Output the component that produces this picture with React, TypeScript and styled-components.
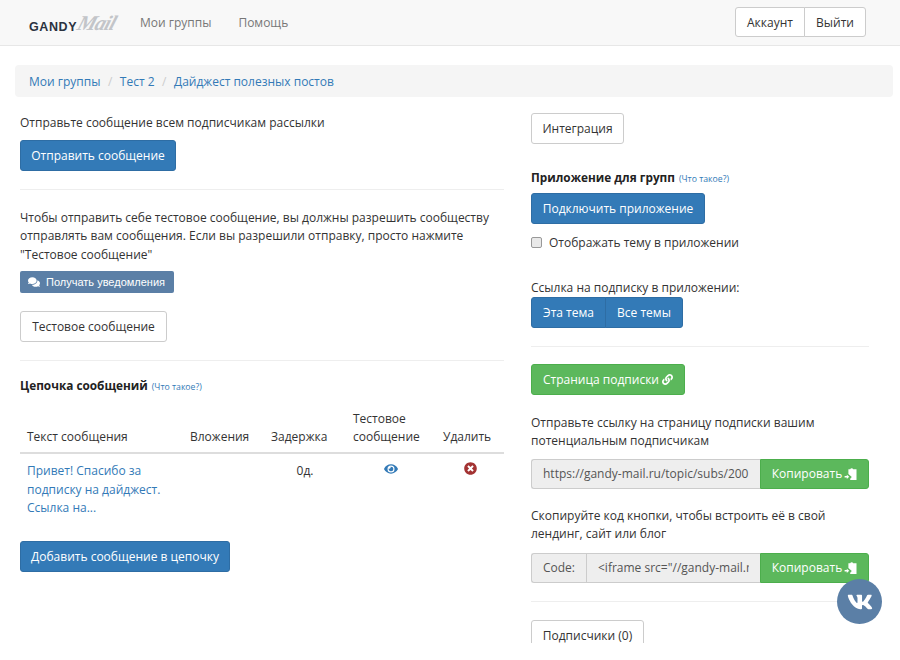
import styled, { createGlobalStyle } from "styled-components";
import { FaComments, FaEye, FaLink, FaTimesCircle, FaVk } from "react-icons/fa";

const GlobalStyle = createGlobalStyle`
  html {
    height: 660px;
    overflow: hidden;
    background: #fff;
  }
  body {
    margin: 0;
    height: 643px;
    overflow: hidden;
    background: #fff;
    font-family: "Open Sans", "Noto Sans", sans-serif;
    font-size: 12px;
    color: #333;
  }
  * {
    box-sizing: border-box;
  }
`;

const Navbar = styled.nav`
  height: 46px;
  background: #f8f8f8;
  border-bottom: 1px solid #e7e7e7;
  display: flex;
  align-items: center;
  padding: 0 34px 0 29px;
`;

const Logo = styled.div`
  width: 111px;
  display: flex;
  align-items: baseline;
  color: #2b3240;
  font-family: "Liberation Sans", sans-serif;
  font-weight: 700;
  font-size: 12.5px;
  letter-spacing: 0.6px;
  padding-top: 4px;
`;

const LogoScript = styled.span`
  font-family: "Liberation Serif", serif;
  font-style: italic;
  font-size: 21px;
  font-weight: 700;
  letter-spacing: -1px;
  color: #c3c5c9;
  margin-left: 1px;
  transform: translateY(-1px) skewX(-18deg);
`;

const NavLinks = styled.div`
  display: flex;
  gap: 27px;
  flex: 1;
  margin-top: -1px;
`;

const NavLink = styled.a`
  color: #777;
`;

const NavButtons = styled.div`
  display: flex;
  margin-top: -1px;
`;

const Button = styled.button<{ $variant?: "default" | "primary" | "success"; $joined?: boolean; $width: number; $height?: number }>`
  width: ${(props) => props.$width}px;
  height: ${(props) => props.$height ?? 31}px;
  flex: none;
  padding: 0;
  border-radius: 3px;
  font-family: inherit;
  font-size: 12px;
  display: inline-flex;
  align-items: center;
  justify-content: center;
  gap: 3px;
  background: ${(props) =>
    props.$variant === "primary" ? "#337ab7" : props.$variant === "success" ? "#5cb85c" : "#fff"};
  color: ${(props) => (props.$variant && props.$variant !== "default" ? "#fff" : "#333")};
  border: 1px solid
    ${(props) =>
      props.$variant === "primary" ? "#2e6da4" : props.$variant === "success" ? "#4cae4c" : "#ccc"};
  &:first-child {
    ${(props) => props.$joined && "border-top-right-radius: 0; border-bottom-right-radius: 0;"}
  }
  &:not(:first-child) {
    ${(props) => props.$joined && "border-top-left-radius: 0; border-bottom-left-radius: 0; margin-left: -1px;"}
  }
`;

const ButtonRow = styled.div<{ $top?: number }>`
  display: flex;
  margin-top: ${(props) => props.$top ?? 0}px;
`;

const Breadcrumb = styled.div`
  margin: 19px 7px 0 15px;
  height: 32px;
  background: #f5f5f5;
  border-radius: 4px;
  display: flex;
  align-items: center;
  padding: 0 14px;
  color: #337ab7;
`;

const Crumb = styled.a`
  color: #337ab7;
`;

const CrumbSep = styled.span`
  color: #ccc;
  padding: 0 7.5px;
`;

const Columns = styled.div`
  display: grid;
  grid-template-columns: 484px 338px;
  column-gap: 27px;
  padding-left: 20px;
`;

const Column = styled.div<{ $top: number }>`
  padding-top: ${(props) => props.$top}px;
  display: flex;
  flex-direction: column;
  align-items: flex-start;
`;

const Text = styled.p<{ $top?: number }>`
  margin: ${(props) => props.$top ?? 0}px 0 0;
  line-height: 18.6px;
`;

const Divider = styled.hr<{ $top: number; $bottom: number }>`
  width: 100%;
  margin: ${(props) => props.$top}px 0 ${(props) => props.$bottom}px;
  border: 0;
  border-top: 1px solid #eee;
`;

const Heading = styled.div<{ $top?: number }>`
  margin-top: ${(props) => props.$top ?? 0}px;
  font-weight: 700;
  font-size: 11.8px;
  line-height: 18px;
  color: #222;
`;

const Hint = styled.a`
  font-weight: 400;
  font-size: 8.7px;
  color: #337ab7;
  margin-left: 4px;
`;

const VkNotify = styled.div`
  margin-top: 7px;
  width: 154px;
  height: 22px;
  background: #5b7fa6;
  border-radius: 2px;
  color: #fff;
  font-family: "Liberation Sans", sans-serif;
  font-size: 11px;
  display: flex;
  align-items: center;
  gap: 6px;
  padding-left: 8px;
`;

const Table = styled.table`
  width: 100%;
  margin-top: 14px;
  border-collapse: collapse;
  table-layout: fixed;
`;

const Th = styled.th<{ $width: number }>`
  width: ${(props) => props.$width}px;
  text-align: left;
  font-weight: 400;
  vertical-align: bottom;
  line-height: 18px;
  padding: 0 7px 6px;
  border-bottom: 2px solid #ddd;
`;

const Td = styled.td<{ $center?: boolean }>`
  vertical-align: top;
  line-height: 18.3px;
  padding: 8px 7px 7px;
  text-align: ${(props) => (props.$center ? "center" : "left")};
`;

const MessageLink = styled.a`
  color: #337ab7;
`;

const CheckRow = styled.label`
  margin-top: 9px;
  display: flex;
  align-items: center;
  gap: 7px;
  height: 18px;
`;

const CheckBox = styled.span`
  width: 11px;
  height: 11px;
  background: #e9e9e9;
  border: 1px solid #999;
  border-radius: 2px;
`;

const InputGroup = styled.div<{ $top: number }>`
  width: 338px;
  height: 30px;
  margin-top: ${(props) => props.$top}px;
  display: flex;
`;

const Addon = styled.span`
  width: 55px;
  flex: none;
  background: #eee;
  border: 1px solid #ccc;
  border-right: 0;
  border-radius: 3px 0 0 3px;
  color: #555;
  display: flex;
  align-items: center;
  justify-content: center;
`;

const Field = styled.div<{ $joined?: boolean }>`
  flex: 1;
  min-width: 0;
  background: #eee;
  border: 1px solid #ccc;
  border-right: 0;
  border-radius: ${(props) => (props.$joined ? "0" : "3px 0 0 3px")};
  color: #555;
  line-height: 28px;
  padding: 0 11px;
`;

const FieldValue = styled.div`
  white-space: nowrap;
  overflow: hidden;
`;

const CopyButton = styled.button`
  width: 109px;
  flex: none;
  background: #5cb85c;
  border: 1px solid #4cae4c;
  border-radius: 0 3px 3px 0;
  color: #fff;
  font-family: inherit;
  font-size: 12px;
  display: flex;
  align-items: center;
  justify-content: center;
  gap: 2px;
  padding: 0;
`;

const VkBubble = styled.a`
  position: fixed;
  left: 837px;
  top: 579px;
  width: 45px;
  height: 45px;
  border-radius: 50%;
  background: #5b7fa6;
  color: #fff;
  display: flex;
  align-items: center;
  justify-content: center;
  font-size: 26px;
`;

function PasteIcon() {
  return (
    <svg width="13" height="13" viewBox="0 0 13 13" fill="#fff">
      <path d="M4.4 2.2h1.8a1.6 1.6 0 0 1 3 0h3.3V13H6.2v-1.2l1.6-1.9-3.4-2.8z" />
      <path d="M0.6 9h2.2V7.7l2.4 2.1-2.4 2.1v-1.3H0.6z" />
    </svg>
  );
}

function App() {
  return (
    <>
      <GlobalStyle />
      <Navbar>
        <Logo>
          GANDY<LogoScript>Mail</LogoScript>
        </Logo>
        <NavLinks>
          <NavLink>Мои группы</NavLink>
          <NavLink>Помощь</NavLink>
        </NavLinks>
        <NavButtons>
          <Button $joined $width={70} $height={30}>Аккаунт</Button>
          <Button $joined $width={62} $height={30}>Выйти</Button>
        </NavButtons>
      </Navbar>
      <Breadcrumb>
        <Crumb>Мои группы</Crumb>
        <CrumbSep>/</CrumbSep>
        <Crumb>Тест 2</Crumb>
        <CrumbSep>/</CrumbSep>
        <Crumb>Дайджест полезных постов</Crumb>
      </Breadcrumb>
      <Columns>
        <Column $top={17}>
          <Text>Отправьте сообщение всем подписчикам рассылки</Text>
          <ButtonRow $top={7}>
            <Button $variant="primary" $width={156}>Отправить сообщение</Button>
          </ButtonRow>
          <Divider $top={18} $bottom={19} />
          <Text>
            Чтобы отправить себе тестовое сообщение, вы должны разрешить сообществу
            <br />
            отправлять вам сообщения. Если вы разрешили отправку, просто нажмите
            <br />
            "Тестовое сообщение"
          </Text>
          <VkNotify>
            <FaComments size={12} />
            Получать уведомления
          </VkNotify>
          <ButtonRow $top={18}>
            <Button $width={147}>Тестовое сообщение</Button>
          </ButtonRow>
          <Divider $top={18} $bottom={15} />
          <Heading>
            Цепочка сообщений<Hint>(Что такое?)</Hint>
          </Heading>
          <Table>
            <thead>
              <tr>
                <Th $width={163}>Текст сообщения</Th>
                <Th $width={81}>Вложения</Th>
                <Th $width={82}>Задержка</Th>
                <Th $width={90}>Тестовое сообщение</Th>
                <Th $width={68}>Удалить</Th>
              </tr>
            </thead>
            <tbody>
              <tr>
                <Td>
                  <MessageLink>Привет! Спасибо за подписку на дайджест. Ссылка на...</MessageLink>
                </Td>
                <Td />
                <Td $center>0д.</Td>
                <Td $center>
                  <FaEye size={14} color="#337ab7" />
                </Td>
                <Td $center>
                  <FaTimesCircle size={13} color="#a33333" />
                </Td>
              </tr>
            </tbody>
          </Table>
          <ButtonRow $top={17}>
            <Button $variant="primary" $width={210}>Добавить сообщение в цепочку</Button>
          </ButtonRow>
        </Column>
        <Column $top={16}>
          <Button $width={93}>Интеграция</Button>
          <Heading $top={24}>
            Приложение для групп<Hint>(Что такое?)</Hint>
          </Heading>
          <ButtonRow $top={5}>
            <Button $variant="primary" $width={174}>Подключить приложение</Button>
          </ButtonRow>
          <CheckRow>
            <CheckBox />
            Отображать тему в приложении
          </CheckRow>
          <Text $top={28}>Ссылка на подписку в приложении:</Text>
          <ButtonRow $top={-1}>
            <Button $joined $variant="primary" $width={75}>Эта тема</Button>
            <Button $joined $variant="primary" $width={78}>Все темы</Button>
          </ButtonRow>
          <Divider $top={18} $bottom={17} />
          <Button $variant="success" $width={154}>
            Страница подписки <FaLink size={11} />
          </Button>
          <Text $top={19}>
            Отправьте ссылку на страницу подписки вашим
            <br />
            потенциальным подписчикам
          </Text>
          <InputGroup $top={8}>
            <Field>
              <FieldValue>https://gandy-mail.ru/topic/subs/200</FieldValue>
            </Field>
            <CopyButton>
              Копировать <PasteIcon />
            </CopyButton>
          </InputGroup>
          <Text $top={18}>
            Скопируйте код кнопки, чтобы встроить её в свой
            <br />
            лендинг, сайт или блог
          </Text>
          <InputGroup $top={9}>
            <Addon>Code:</Addon>
            <Field $joined>
              <FieldValue>{'<iframe src="//gandy-mail.ru'}</FieldValue>
            </Field>
            <CopyButton>
              Копировать <PasteIcon />
            </CopyButton>
          </InputGroup>
          <Divider $top={18} $bottom={18} />
          <Button $width={113}>Подписчики (0)</Button>
        </Column>
      </Columns>
      <VkBubble>
        <FaVk />
      </VkBubble>
    </>
  );
}

export default App;
